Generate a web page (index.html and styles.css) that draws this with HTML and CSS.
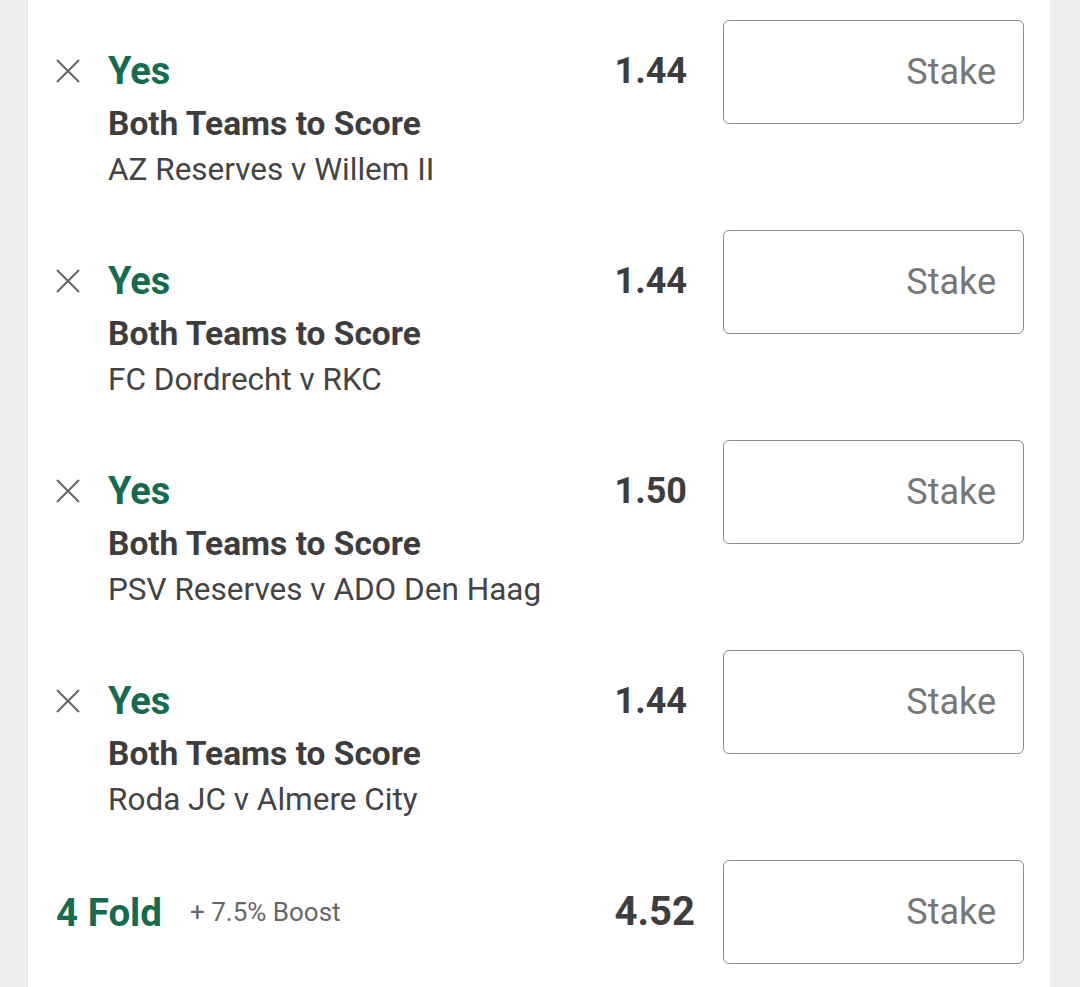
FILE: index.html
```html
<!DOCTYPE html>
<html lang="en">
<head>
    <meta charset="UTF-8">
    <meta name="viewport" content="width=device-width, initial-scale=1.0">
    <title>Bet Slip</title>
    <link rel="stylesheet" href="styles.css">
</head>
<body>
    <div class="slip">
        <div class="bet">
            <div class="remove">
                <svg viewBox="0 0 24 24" width="24" height="24"><path d="M1 1L23 23M23 1L1 23" /></svg>
            </div>
            <div class="info">
                <div class="pick">Yes</div>
                <div class="market">Both Teams to Score</div>
                <div class="event">AZ Reserves v Willem II</div>
            </div>
            <div class="odds">1.44</div>
            <div class="stake">Stake</div>
        </div>

        <div class="bet">
            <div class="remove">
                <svg viewBox="0 0 24 24" width="24" height="24"><path d="M1 1L23 23M23 1L1 23" /></svg>
            </div>
            <div class="info">
                <div class="pick">Yes</div>
                <div class="market">Both Teams to Score</div>
                <div class="event">FC Dordrecht v RKC</div>
            </div>
            <div class="odds">1.44</div>
            <div class="stake">Stake</div>
        </div>

        <div class="bet">
            <div class="remove">
                <svg viewBox="0 0 24 24" width="24" height="24"><path d="M1 1L23 23M23 1L1 23" /></svg>
            </div>
            <div class="info">
                <div class="pick">Yes</div>
                <div class="market">Both Teams to Score</div>
                <div class="event">PSV Reserves v ADO Den Haag</div>
            </div>
            <div class="odds">1.50</div>
            <div class="stake">Stake</div>
        </div>

        <div class="bet">
            <div class="remove">
                <svg viewBox="0 0 24 24" width="24" height="24"><path d="M1 1L23 23M23 1L1 23" /></svg>
            </div>
            <div class="info">
                <div class="pick">Yes</div>
                <div class="market">Both Teams to Score</div>
                <div class="event">Roda JC v Almere City</div>
            </div>
            <div class="odds">1.44</div>
            <div class="stake">Stake</div>
        </div>

        <div class="multiple">
            <div class="fold">4 Fold</div>
            <div class="boost">+ 7.5% Boost</div>
            <div class="odds odds-total">4.52</div>
            <div class="stake">Stake</div>
        </div>
    </div>
</body>
</html>
```

FILE: styles.css
```css
body {
    margin: 0;
    padding: 0;
    background-color: #efefef;
    font-family: Roboto, 'Liberation Sans', sans-serif;
    color: #3d3d3d;
}

.slip {
    margin: 0 30px 0 27px;
    border-left: 1px solid #e4e4e4;
    background-color: #fff;
    padding: 20px 26px 30px 28px;
    min-height: 987px;
    box-sizing: border-box;
}

.bet {
    display: flex;
    align-items: flex-start;
    height: 210px;
}

.remove {
    width: 52px;
    padding-top: 39px;
}

.remove svg {
    display: block;
    stroke: #666;
    stroke-width: 2;
    fill: none;
}

.info {
    flex: 1;
    padding-top: 25px;
}

.pick {
    color: #166b4f;
    font-weight: 700;
    font-size: 38px;
    line-height: 52px;
}

.market {
    font-weight: 700;
    font-size: 33.5px;
    line-height: 53px;
}

.event {
    font-size: 31.5px;
    line-height: 40px;
    color: #444;
}

.odds {
    font-weight: 700;
    font-size: 36px;
    line-height: 52px;
    padding-top: 25px;
    margin-right: 36px;
}

.stake {
    width: 301px;
    height: 104px;
    border: 1.5px solid #8c8c8c;
    border-radius: 6px;
    box-sizing: border-box;
    display: flex;
    align-items: center;
    justify-content: flex-end;
    padding-right: 27px;
    font-size: 36px;
    color: #777;
}

.multiple {
    display: flex;
    align-items: center;
    height: 104px;
}

.fold {
    color: #166b4f;
    font-weight: 700;
    font-size: 38.5px;
    margin-right: 28px;
}

.boost {
    flex: 1;
    font-size: 26px;
    color: #666;
}

.odds-total {
    font-size: 40px;
    padding-top: 0;
    margin-right: 28px;
}
```
